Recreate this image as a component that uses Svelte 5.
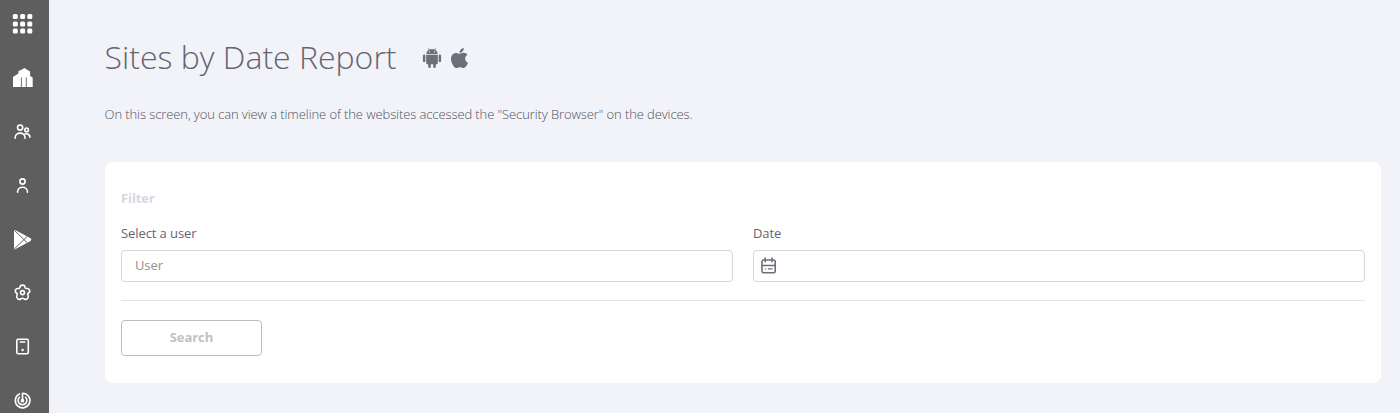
<script>
  const dots = [4.7, 12, 19.2];
</script>

<div class="app">
  <nav class="sidebar" aria-label="Main">
    <svg viewBox="0 0 24 24" fill="#fff">
      {#each dots as y}
        {#each dots as x}
          <rect x={x - 1.9} y={y - 2.6} width="5" height="5" rx="1.5" />
        {/each}
      {/each}
    </svg>
    <svg viewBox="0 0 24 24">
      <path fill="#fff" d="M3 21V11L8.4 7.5V5.2Q9.5 4.6 11 4L14.5 2l3 2q2.5 1 2.6 1.8v4l2.6 2V21z" />
      <path d="M11.4 21v-9.5M16.3 21v-9.5" stroke="#5e5e5e" stroke-width=".9" />
    </svg>
    <svg class="line" viewBox="0 0 24 24">
      <circle cx="10.1" cy="7.6" r="2.6" />
      <circle cx="16.6" cy="9.9" r="1.8" />
      <path d="M5.2 18.2v-.7a4.9 4.4 0 0 1 9.8 0v.7M15.2 13.9c2.7-.5 4.8.9 4.8 3.4" />
    </svg>
    <svg class="line" viewBox="0 0 24 24">
      <circle cx="12.5" cy="7.5" r="2.6" />
      <path d="M7.6 18.2v-.6a4.9 4.4 0 0 1 9.8 0v.6" />
    </svg>
    <svg viewBox="0 0 24 24">
      <path fill="#fff" d="M4 2l1.1.1 15.5 8.2q1.6 1.3 0 2.6L5.1 21.3 4 21.4z" />
      <path d="M4.3 2.3l13 12.5M4.3 21l13-12.6" fill="none" stroke="#5e5e5e" stroke-width="1" />
    </svg>
    <svg class="line" viewBox="0 0 24 24">
      <path d="M10 5.2C10.3 2.4 14.7 2.4 15 5.2Q15.2 6.7 16.7 6.5C19.5 6 20.8 9.7 18.5 11Q17.1 12 18 13.3C19.4 15.8 16.4 18.6 14.2 16.8Q12.5 15.6 10.8 16.8C8.6 18.6 5.6 15.8 7 13.3Q7.9 12 6.5 11C4.2 9.7 5.5 6 8.3 6.5Q9.8 6.7 10 5.2z" />
      <circle cx="12.5" cy="10.6" r="2" />
    </svg>
    <svg class="line" viewBox="0 0 24 24">
      <rect x="6.8" y="3.3" width="11.5" height="14.5" rx="1.5" />
      <path d="M10.2 6h4.7" stroke-width="1.3" />
      <circle cx="12.5" cy="14" r=".8" fill="#fff" stroke-width="1" />
    </svg>
    <svg class="line" viewBox="0 0 24 24">
      <path d="M12.5 3.2v6.8M12.5 3.2a7.3 7.3 0 1 1-3 .7M9.4 7.2a4.4 4.4 0 1 0 6.2 0" />
      <circle cx="12.5" cy="10.7" r="1.1" fill="#fff" />
    </svg>
  </nav>

  <main>
    <header>
      <h1>Sites by Date Report</h1>
      <svg class="android" viewBox="0 0 20 22" fill="#6e6e7a">
        <path d="M4.2 7.2a5.3 5.3 0 0 1 2.7-4.5L5.9 1l.5-.3 1.1 1.7a6.6 6.6 0 0 1 5 0L13.6.7l.5.3-1 1.7a5.3 5.3 0 0 1 2.7 4.5z" />
        <path d="M4.2 8h11.6v8a1.2 1.2 0 0 1-1.2 1.2h-.8v2.5a1.3 1.3 0 0 1-2.6 0v-2.5H8.8v2.5a1.3 1.3 0 0 1-2.6 0v-2.5h-.8A1.2 1.2 0 0 1 4.2 16z" />
        <rect x=".9" y="7.5" width="2.5" height="7.6" rx="1.2" />
        <rect x="16.6" y="7.5" width="2.5" height="7.6" rx="1.2" />
        <circle cx="7.5" cy="4.9" r=".6" fill="#f2f3f8" />
        <circle cx="12.5" cy="4.9" r=".6" fill="#f2f3f8" />
      </svg>
      <svg class="apple" viewBox="4 30 376 450" preserveAspectRatio="none" fill="#6e6e7a">
        <path d="M318.7 268.7c-.2-36.7 16.4-64.4 50-84.8-18.8-26.9-47.2-41.7-84.7-44.6-35.5-2.8-74.3 20.7-88.5 20.7-15 0-49.4-19.7-76.4-19.7C63.3 141.2 4 184.8 4 273.5q0 39.3 14.4 81.2c12.8 36.7 59 126.7 107.2 125.2 25.2-.6 43-17.9 75.8-17.9 31.8 0 48.3 17.9 76.4 17.9 48.6-.7 90.4-82.5 102.6-119.3-65.2-30.7-61.7-90-61.7-91.9zm-56.6-164.2c27.3-32.4 24.8-61.9 24-72.5-24.1 1.4-52 16.4-67.9 34.9-17.5 19.8-27.8 44.3-25.6 71.9 26.1 2 49.9-11.4 69.5-34.3z" />
      </svg>
    </header>
    <p class="intro">On this screen, you can view a timeline of the websites accessed the "Security Browser" on the devices.</p>

    <section class="card">
      <h2>Filter</h2>
      <div class="fields">
        <label>
          <span>Select a user</span>
          <div class="input user">User</div>
        </label>
        <label>
          <span>Date</span>
          <div class="input date">
            <svg viewBox="0 0 16 17" fill="none" stroke="#6e6e7a" stroke-width="1.6" stroke-linecap="round">
              <rect x="1" y="3" width="13.2" height="12.7" rx="1.5" />
              <path d="M4.2 1v3.7M11 1v3.7M1.2 8.5h13" />
              <path d="M4.4 11.9h.1M7.4 11.9h3.6" stroke-width="1.4" />
            </svg>
          </div>
        </label>
      </div>
      <hr />
      <button>Search</button>
    </section>
  </main>
</div>

<style>
  :global(body) { background: #f2f3f8; overflow: hidden; }
  .app {
    display: flex;
    height: 413px;
    overflow: hidden;
    background: #f2f3f8;
    color: #646471;
    font-family: "Open Sans", sans-serif;
    font-size: 13px;
  }
  .sidebar {
    box-sizing: border-box;
    flex: none;
    width: 49px;
    padding: 12px 0 0 10px;
    display: flex;
    flex-direction: column;
    gap: 30px;
    background: #5e5e5e;
  }
  svg { display: block; flex: none; }
  .sidebar svg { width: 24px; height: 24px; }
  .line {
    fill: none;
    stroke: #fff;
    stroke-width: 1.6;
    stroke-linecap: round;
    stroke-linejoin: round;
  }
  main { flex: 1; padding: 34px 19px 0 55.6px; }
  header { display: flex; align-items: center; height: 48px; }
  h1 { margin: 0; padding-bottom: 2px; font-size: 32px; font-weight: 300; line-height: 46px; width: 317px; white-space: nowrap; }
  .android { width: 20px; height: 22px; }
  .apple { width: 17px; height: 20px; margin-left: 9px; }
  .intro { margin: 22px 0 0; font-weight: 300; line-height: 20px; letter-spacing: -0.096px; white-space: nowrap; color: #50505e; }
  .card {
    box-sizing: border-box;
    height: 221px;
    margin: 38px 0 0 0.4px;
    padding: 26px 16px 0;
    border-radius: 8px;
    background: #fff;
  }
  h2 { margin: 0; font-size: 13px; line-height: 20px; font-weight: 700; letter-spacing: -0.1px; color: #d6d7df; }
  .fields { display: grid; grid-template-columns: 1fr 1fr; gap: 20px; margin-top: 15px; }
  label span { display: block; line-height: 20px; letter-spacing: -0.09px; }
  .input {
    box-sizing: border-box;
    display: flex;
    align-items: center;
    height: 32px;
    margin-top: 7px;
    border: 1px solid #d5d5db;
    border-radius: 4px;
  }
  .user { padding: 0 13px 2px; color: #929292; letter-spacing: -0.1px; }
  .date { padding: 0 0 2px 7px; }
  .date svg { width: 16px; height: 17px; }
  hr { height: 1px; margin: 18px 0 19px; border: 0; background: #e5e5e8; }
  button {
    display: block;
    width: 141px;
    height: 36px;
    padding: 0 0 2px;
    border: 1px solid #bdbdbd;
    border-radius: 4px;
    background: #fff;
    color: #c1c1c1;
    font: 700 13px "Open Sans", sans-serif;
    letter-spacing: -0.05px;
  }
</style>
